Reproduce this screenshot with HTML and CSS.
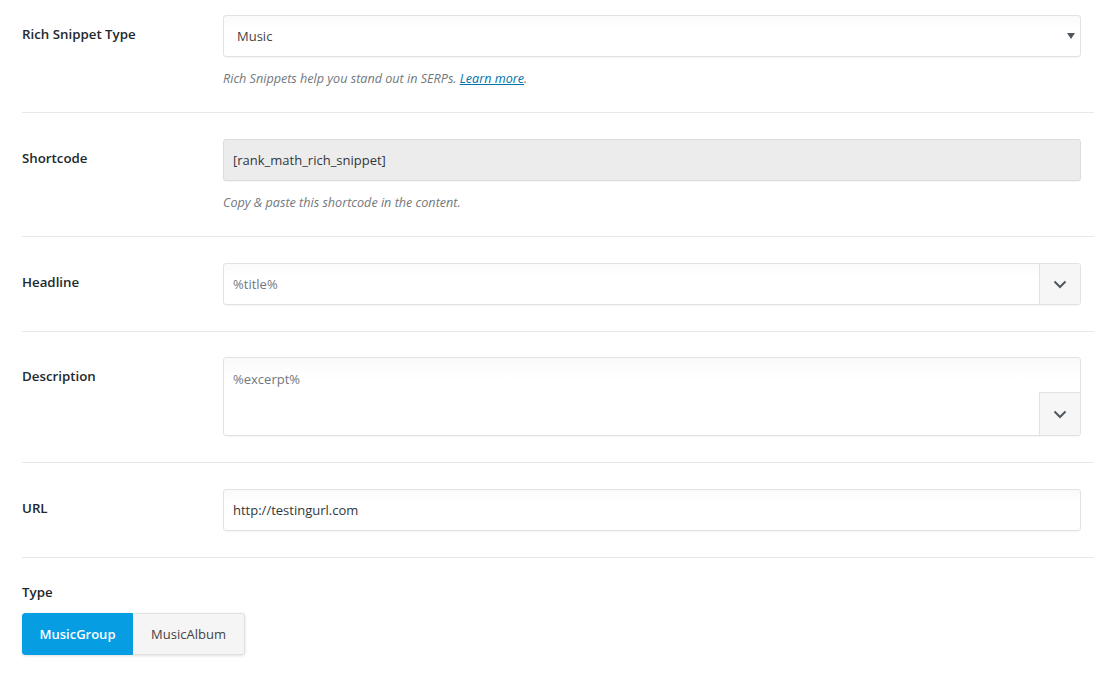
FILE: index.html
```html
<!DOCTYPE html>
<html lang="en">
<head>
<meta charset="utf-8">
<title>Rich Snippet</title>
<link rel="stylesheet" href="styles.css">
</head>
<body>
<div class="panel">
  <div class="row first has-help">
    <div class="label">Rich Snippet Type</div>
    <div class="control">
      <div class="field select">
        <span>Music</span>
        <svg class="caret" width="8" height="6" viewBox="0 0 8 6"><path d="M0 0h8L4 6z" fill="#50575e"/></svg>
      </div>
      <p class="help">Rich Snippets help you stand out in SERPs. <a href="#">Learn more</a>.</p>
    </div>
  </div>
  <div class="row has-help">
    <div class="label">Shortcode</div>
    <div class="control">
      <div class="field readonly"><span>[rank_math_rich_snippet]</span></div>
      <p class="help">Copy &amp; paste this shortcode in the content.</p>
    </div>
  </div>
  <div class="row">
    <div class="label">Headline</div>
    <div class="control">
      <div class="field with-btn">
        <span class="muted">%title%</span>
        <span class="var-btn">
          <svg width="14" height="9" viewBox="0 0 14 9"><path d="M1.5 1.5l5.5 5.5 5.5-5.5" fill="none" stroke="#50575e" stroke-width="2"/></svg>
        </span>
      </div>
    </div>
  </div>
  <div class="row area-row">
    <div class="label">Description</div>
    <div class="control">
      <div class="field textarea">
        <span class="muted">%excerpt%</span>
        <span class="var-btn bottom">
          <svg width="14" height="9" viewBox="0 0 14 9"><path d="M1.5 1.5l5.5 5.5 5.5-5.5" fill="none" stroke="#50575e" stroke-width="2"/></svg>
        </span>
      </div>
    </div>
  </div>
  <div class="row">
    <div class="label">URL</div>
    <div class="control">
      <div class="field"><span>http://testingurl.com</span></div>
    </div>
  </div>
  <div class="row stacked">
    <div class="label">Type</div>
    <div class="toggle">
      <span class="opt active">MusicGroup</span>
      <span class="opt">MusicAlbum</span>
    </div>
  </div>
</div>
</body>
</html>
```

FILE: styles.css
```css
* { box-sizing: border-box; }
html, body { margin: 0; padding: 0; background: #fff; }
body {
  font-family: "Open Sans", "Noto Sans", sans-serif;
  font-size: 13px;
  color: #32373c;
}
.panel { width: 1072px; margin-left: 22px; }
.row {
  display: grid;
  grid-template-columns: 201px 858px;
  padding: 26px 0 26px;
  border-bottom: 1px solid #e8e8e8;
}
.row.has-help { padding-bottom: 23px; }
.row.first { padding-top: 15px; }
.row.area-row { padding-top: 25px; }
.row.stacked { display: block; border-bottom: none; padding-top: 24px; }
.label {
  font-weight: 600;
  color: #23282d;
  line-height: 20px;
  padding-top: 9px;
  font-size: 13.3px;
}
.row.stacked .label { padding-top: 0; }
.field {
  position: relative;
  height: 42px;
  border: 1px solid #e2e2e2;
  border-radius: 3px;
  background: linear-gradient(#fafafa, #fff 30%);
  box-shadow: 0 1px 1px rgba(0,0,0,0.04);
  display: flex;
  align-items: center;
  padding: 0 9px;
  color: #32373c;
  line-height: 20px;
}
.field.select { color: #444; padding-left: 13px; }
.caret { position: absolute; right: 5px; top: 17px; }
.field.readonly { background: #ececec; border-color: #dcdcdc; }
.muted { color: #72777c; }
.field.with-btn { padding-right: 0; }
.var-btn {
  position: absolute;
  right: 0;
  top: 0;
  bottom: 0;
  width: 41px;
  background: #f6f6f6;
  border-left: 1px solid #e2e2e2;
  display: flex;
  align-items: center;
  justify-content: center;
  border-radius: 0 3px 3px 0;
}
.field.textarea {
  height: 79px;
  align-items: flex-start;
  padding-top: 11px;
}
.var-btn.bottom {
  top: auto;
  height: 43px;
  border-top: 1px solid #e2e2e2;
  border-radius: 0 0 3px 0;
}
.help {
  margin: 12px 0 0;
  line-height: 20px;
  font-size: 12.6px;
  font-style: italic;
  color: #72777c;
}
.help a { color: #0073aa; }
.toggle {
  display: inline-flex;
  margin-top: 11px;
  border-radius: 3px;
  box-shadow: 0 1px 3px rgba(0,0,0,0.12);
}
.opt {
  height: 42px;
  display: flex;
  align-items: center;
  justify-content: center;
  width: 112px;
  background: #f5f5f5;
  border: 1px solid #e0e0e0;
  border-left: none;
  color: #444;
  border-radius: 0 3px 3px 0;
}
.opt.active {
  width: 111px;
  background: #069de3;
  border: 1px solid #069de3;
  color: #fff;
  font-weight: 600;
  border-radius: 3px 0 0 3px;
}
```
